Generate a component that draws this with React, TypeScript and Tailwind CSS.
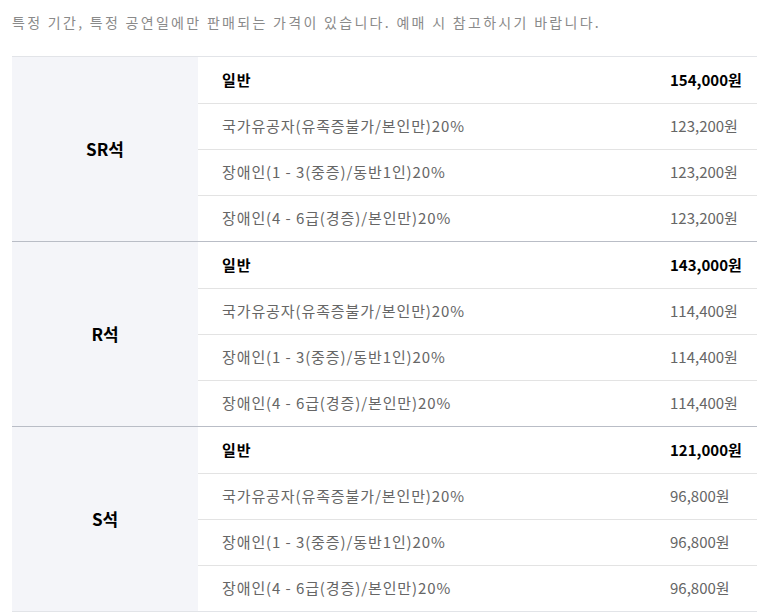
const groups = [
  {
    seat: "SR석",
    rows: [
      { label: "일반", price: "154,000원", bold: true },
      { label: "국가유공자(유족증불가/본인만)20%", price: "123,200원" },
      { label: "장애인(1 - 3(중증)/동반1인)20%", price: "123,200원" },
      { label: "장애인(4 - 6급(경증)/본인만)20%", price: "123,200원" },
    ],
  },
  {
    seat: "R석",
    rows: [
      { label: "일반", price: "143,000원", bold: true },
      { label: "국가유공자(유족증불가/본인만)20%", price: "114,400원" },
      { label: "장애인(1 - 3(중증)/동반1인)20%", price: "114,400원" },
      { label: "장애인(4 - 6급(경증)/본인만)20%", price: "114,400원" },
    ],
  },
  {
    seat: "S석",
    rows: [
      { label: "일반", price: "121,000원", bold: true },
      { label: "국가유공자(유족증불가/본인만)20%", price: "96,800원" },
      { label: "장애인(1 - 3(중증)/동반1인)20%", price: "96,800원" },
      { label: "장애인(4 - 6급(경증)/본인만)20%", price: "96,800원" },
    ],
  },
]

export default function App() {
  return (
    <div className="w-[765px] h-[616px] bg-white px-3 pt-[12px] font-['Noto_Sans_CJK_KR','Noto_Sans',sans-serif] overflow-hidden">
      <p className="text-[14px] leading-[20px] text-[#8a8a8a] tracking-[2.3px]">
        특정 기간, 특정 공연일에만 판매되는 가격이 있습니다. 예매 시 참고하시기 바랍니다.
      </p>

      <div className="mt-[24px] w-[745px] border-t border-[#e2e4e8] border-b">
        {groups.map((g, gi) => (
          <div key={g.seat} className={`flex ${gi > 0 ? "border-t border-[#b9bdc6]" : ""}`}>
            <div className="w-[186px] bg-[#f4f5f9] flex items-center justify-center text-[17px] font-bold text-black">
              {g.seat}
            </div>
            <div className="flex-1">
              {g.rows.map((r, ri) => (
                <div
                  key={ri}
                  className={`h-[46px] flex items-center pl-6 text-[15px] ${ri > 0 ? "border-t border-[#e3e3e3]" : ""} ${r.bold ? "font-bold text-black" : "text-[#666]"}`}
                >
                  <span className={`flex-1 ${r.bold ? "tracking-[1px]" : "tracking-[0.9px]"}`}>{r.label}</span>
                  <span className="w-[87px]">{r.price}</span>
                </div>
              ))}
            </div>
          </div>
        ))}
      </div>
    </div>
  )
}
